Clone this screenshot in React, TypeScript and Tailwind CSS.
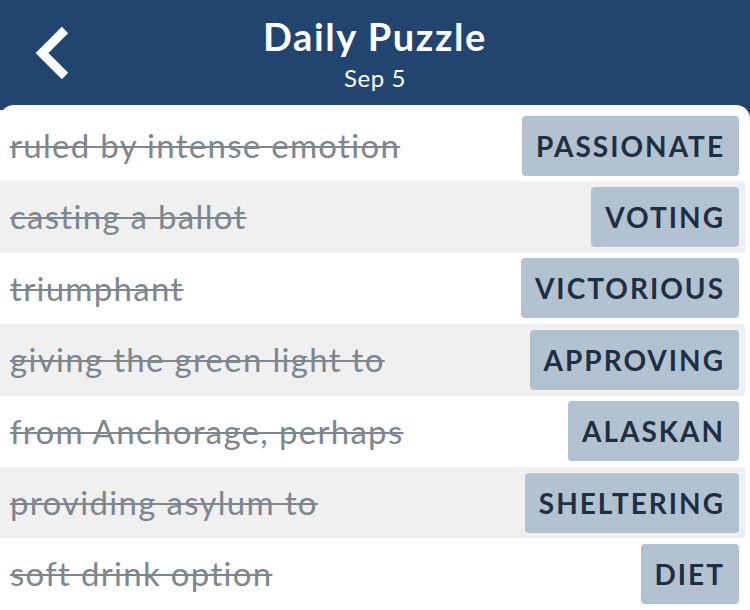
import React from 'react';

interface Clue {
  clue: string;
  answer: string;
}

const clues: Clue[] = [
  { clue: 'ruled by intense emotion', answer: 'PASSIONATE' },
  { clue: 'casting a ballot', answer: 'VOTING' },
  { clue: 'triumphant', answer: 'VICTORIOUS' },
  { clue: 'giving the green light to', answer: 'APPROVING' },
  { clue: 'from Anchorage, perhaps', answer: 'ALASKAN' },
  { clue: 'providing asylum to', answer: 'SHELTERING' },
  { clue: 'soft drink option', answer: 'DIET' },
];

const App = () => {
  return (
    <div className="w-[750px] h-[610px] overflow-hidden bg-[#21456f] font-['Lato',sans-serif]">
      {/* Header */}
      <div className="relative h-[105px] flex flex-col items-center text-white">
        <button className="absolute left-[30px] top-[24px] w-[46px] h-[58px] flex items-center justify-center">
          <svg width="40" height="56" viewBox="0 0 40 56" fill="none">
            <path d="M32 5 L9 28 L32 51" stroke="white" strokeWidth="9" strokeLinecap="butt" strokeLinejoin="miter" />
          </svg>
        </button>
        <h1 className="mt-[13px] text-[38px] leading-[46px] font-bold tracking-[1.6px]">Daily Puzzle</h1>
        <div className="text-[24px] leading-[28px] mt-[5px] tracking-[0.6px]">Sep 5</div>
      </div>

      {/* List */}
      <div className="bg-white rounded-t-[14px] h-[505px] pt-[5px] pr-[5px]">
        {clues.map((c, i) => (
          <div
            key={c.answer}
            className={`h-[71.4px] flex items-center justify-between pl-[10px] pr-[6px] ${
              i % 2 === 1 ? 'bg-[#f0f0f0]' : 'bg-white'
            }`}
          >
            <span className="text-[33px] tracking-[1.3px] text-[#7e868f] line-through decoration-[2px] whitespace-nowrap">
              {c.clue}
            </span>
            <div className="h-[60px] px-[14px] flex items-center rounded-[4px] bg-[#b3c2d0] text-[#1e2f44] text-[28px] font-bold tracking-[2px]">
              {c.answer}
            </div>
          </div>
        ))}
      </div>
    </div>
  );
};

export default App;
